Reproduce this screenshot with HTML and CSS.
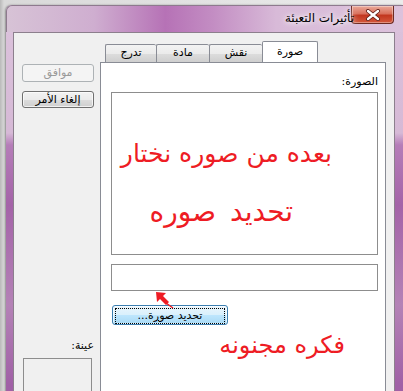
FILE: index.html
```html
<!DOCTYPE html>
<html lang="ar" dir="rtl">
<head>
    <meta charset="UTF-8">
    <title>تأثيرات التعبئة</title>
    <link rel="stylesheet" href="styles.css">
</head>
<body>
    <div class="window">
        <div class="titlebar">
            <div class="close-btn">
                <svg width="16" height="12" viewBox="0 0 16 12">
                    <path d="M3 2 L13 10 M13 2 L3 10" stroke="#5b1a12" stroke-width="4" stroke-linecap="round"/>
                    <path d="M3 2 L13 10 M13 2 L3 10" stroke="#fff" stroke-width="2.4" stroke-linecap="round"/>
                </svg>
            </div>
            <div class="title">تأثيرات التعبئة</div>
        </div>

        <div class="frame">
            <div class="client">
                <div class="tabs-area">
                    <div class="tab-strip">
                        <div class="tab active">صورة</div>
                        <div class="tab w53">نقش</div>
                        <div class="tab w53">مادة</div>
                        <div class="tab w51">تدرج</div>
                    </div>
                    <div class="tab-panel">
                        <div class="field-label">الصورة:</div>
                        <div class="picture-box">
                            <p class="note note-1">بعده من صوره نختار</p>
                            <p class="note note-2">تحديد صوره</p>
                        </div>
                        <div class="file-box"></div>
                        <div class="pick-row">
                            <button class="btn btn-hot"><span class="focus-ring">تحديد صو<u>ر</u>ة...</span></button>
                        </div>
                        <svg class="pin" width="20" height="18" viewBox="0 0 20 18">
                            <path d="M1 1 L11 2 L8 5 L14 11 L11 14 L5 8 L2 11 Z" fill="#ee1c24"/>
                            <path d="M11 12 L18 17" stroke="#ee1c24" stroke-width="1.5"/>
                        </svg>
                        <p class="note note-3">فكره مجنونه</p>
                    </div>
                </div>

                <div class="side">
                    <button class="btn" disabled>موافق</button>
                    <button class="btn">إلغاء الأمر</button>
                    <div class="sample-label">عينة:</div>
                    <div class="sample-box"></div>
                </div>
            </div>
        </div>
    </div>
</body>
</html>
```

FILE: styles.css
```css
:root {
    --tab-border: #898c95;
    --note-red: #ee1c24;
}

html, body {
    margin: 0;
    height: 391px;
    overflow: hidden;
}

body {
    background: linear-gradient(to right, #b9b9b9 0, #d9d9d9 4px, #ececec 100%);
    font-family: "DejaVu Sans", sans-serif;
    font-size: 11px;
    color: #000;
}

.window {
    margin: 5px 0 0 6px;
    width: 397px;
    border-radius: 6px 0 0 0;
    box-shadow: -1px 0 2px rgba(0, 0, 0, 0.35);
    background: linear-gradient(to bottom, #dcc3dc 0, #d6b9d6 128px, #b57db8 140px, #a463a8 200px, #b482b6 300px, #a060a6 380px);
}

/* title bar */
.titlebar {
    height: 27px;
    display: flex;
    align-items: flex-start;
    border-radius: 6px 0 0 0;
    background: linear-gradient(to right, #d7c3d6 0, #cfaed0 22%, #b672b6 40%, #c38dc3 52%, #d8bad8 68%, #dcc2dc 100%);
    border-top: 1px solid #8e7a8e;
    border-left: 1px solid #8e7a8e;
    box-sizing: border-box;
}

.close-btn {
    width: 43px;
    height: 18px;
    margin-right: 9px;
    display: flex;
    align-items: center;
    justify-content: center;
    border: 1px solid #6d2a22;
    border-top: 0;
    border-radius: 0 0 4px 4px;
    box-sizing: border-box;
    background: linear-gradient(to bottom, #eaa99a 0, #d9705c 45%, #c2361f 55%, #d4583c 100%);
    box-shadow: inset 0 0 0 1px rgba(255, 255, 255, 0.35);
}

.title {
    margin-right: -3px;
    padding-top: 5px;
    font-size: 12px;
    position: relative;
    text-shadow: 0 0 5px #fff, 0 0 8px #fff;
}

/* frame + client */
.frame {
    padding: 0 8px 0 7px;
}

.client {
    height: 362px;
    display: flex;
    gap: 6px;
    padding: 0 8px;
    background: #f0f0f0;
    border: 1px solid #8c7f8d;
    border-bottom: 0;
}

.tabs-area {
    width: 286px;
    padding-top: 8px;
}

.tab-strip {
    display: flex;
    align-items: flex-end;
    height: 21px;
    padding-right: 68px;
}

.tab {
    height: 18px;
    box-sizing: border-box;
    border: 1px solid var(--tab-border);
    border-right: 0;
    border-bottom: 0;
    border-radius: 2px 2px 0 0;
    background: linear-gradient(to bottom, #f3f3f3 0, #ebebeb 50%, #dddddd 51%, #cfcfcf 100%);
    text-align: center;
    line-height: 16px;
}

.tab.active {
    width: 56px;
    height: 22px;
    margin-bottom: -1px;
    border-right: 1px solid var(--tab-border);
    background: #fff;
    position: relative;
    line-height: 19px;
}

.w53 { width: 53px; }
.w51 { width: 51px; }

.tab-panel {
    position: relative;
    height: 340px;
    padding: 0 7px 0 10px;
    background: #fff;
    border: 1px solid var(--tab-border);
}

.field-label {
    margin-top: 11px;
    line-height: 16px;
}

.picture-box {
    margin-top: 2px;
    height: 163px;
    box-sizing: border-box;
    border: 1px solid #8d8d8d;
    overflow: hidden;
}

.note {
    margin: 0;
    color: var(--note-red);
    font-size: 25px;
    line-height: 34px;
    white-space: nowrap;
}

.note-1 {
    margin-top: 44px;
    padding-right: 45px;
}

.note-2 {
    margin-top: 24px;
    padding-right: 84px;
    font-size: 28px;
    word-spacing: 5px;
}

.note-3 {
    margin-top: 3px;
    padding-right: 33px;
    font-size: 24px;
}

.file-box {
    margin-top: 9px;
    height: 27px;
    box-sizing: border-box;
    border: 1px solid #8d8d8d;
}

.pick-row {
    display: flex;
    justify-content: flex-end;
    margin-top: 14px;
}

.pin {
    position: absolute;
    left: 54px;
    top: 228px;
}

/* buttons */
.btn {
    display: block;
    width: 72px;
    height: 20px;
    padding: 0;
    font-family: inherit;
    font-size: 11px;
    color: #000;
    border: 1px solid #707070;
    border-radius: 3px;
    background: linear-gradient(to bottom, #f2f2f2 0, #ebebeb 50%, #dddddd 51%, #cfcfcf 100%);
    box-shadow: inset 0 0 0 1px rgba(255, 255, 255, 0.7);
}

.btn:disabled {
    color: #9a9a9a;
    border-color: #adb2b5;
    background: #f4f4f4;
    box-shadow: none;
}

.btn-hot {
    width: 116px;
    margin-left: 1px;
    border-color: #3c7fb1;
    background: linear-gradient(to bottom, #eaf6fd 0, #d9f0fc 50%, #bee6fd 51%, #a7d9f5 100%);
    padding: 2px;
}

.focus-ring {
    display: block;
    height: 14px;
    line-height: 14px;
    border: 1px dotted #000;
}

.side {
    width: 72px;
    display: flex;
    flex-direction: column;
    padding-top: 31px;
}

.side .btn + .btn {
    margin-top: 9px;
}

.sample-label {
    margin-top: 231px;
    line-height: 14px;
}

.sample-box {
    margin: 5px 2px 0 1px;
    height: 40px;
    border: 1px solid #8d8d8d;
    background: #f0f0f0;
}
```
